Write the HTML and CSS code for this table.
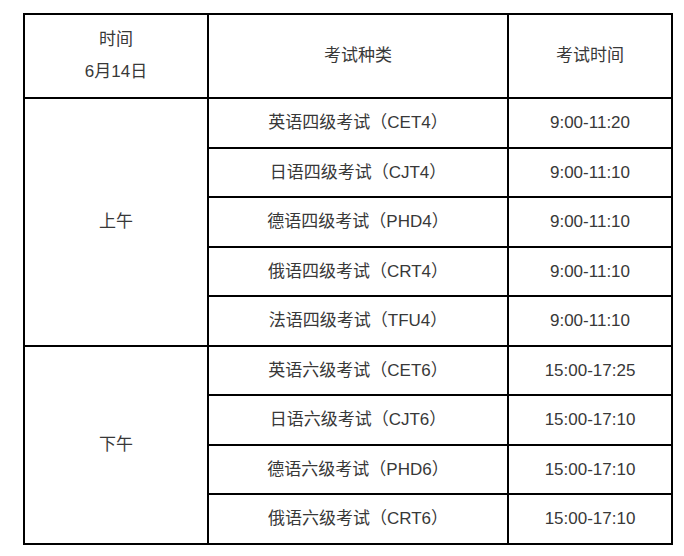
FILE: index.html
```html
<!DOCTYPE html>
<html lang="zh-CN">
<head>
<meta charset="utf-8">
<title>考试时间表</title>
<link rel="stylesheet" href="styles.css">
</head>
<body>
<table class="schedule">
  <colgroup>
    <col class="c1">
    <col class="c2">
    <col class="c3">
  </colgroup>
  <tr class="head">
    <td class="twoline">时间<br>6月14日</td>
    <td>考试种类</td>
    <td>考试时间</td>
  </tr>
  <tr class="r50">
    <td rowspan="5">上午</td>
    <td>英语四级考试（CET4）</td>
    <td>9:00-11:20</td>
  </tr>
  <tr class="r49">
    <td>日语四级考试（CJT4）</td>
    <td>9:00-11:10</td>
  </tr>
  <tr class="r50">
    <td>德语四级考试（PHD4）</td>
    <td>9:00-11:10</td>
  </tr>
  <tr class="r49">
    <td>俄语四级考试（CRT4）</td>
    <td>9:00-11:10</td>
  </tr>
  <tr class="r50">
    <td>法语四级考试（TFU4）</td>
    <td>9:00-11:10</td>
  </tr>
  <tr class="r49">
    <td rowspan="4">下午</td>
    <td>英语六级考试（CET6）</td>
    <td>15:00-17:25</td>
  </tr>
  <tr class="r50">
    <td>日语六级考试（CJT6）</td>
    <td>15:00-17:10</td>
  </tr>
  <tr class="r49">
    <td>德语六级考试（PHD6）</td>
    <td>15:00-17:10</td>
  </tr>
  <tr class="r50">
    <td>俄语六级考试（CRT6）</td>
    <td>15:00-17:10</td>
  </tr>
</table>
</body>
</html>
```
FILE: styles.css
```css
html, body {
  margin: 0;
  padding: 0;
  background: #ffffff;
}
body {
  font-family: "Liberation Sans", "Noto Sans CJK SC", sans-serif;
  font-size: 17px;
  color: #383838;
}
.schedule {
  border-collapse: collapse;
  table-layout: fixed;
  width: 650px;
  margin: 13px 0 0 23px;
}
.c1 { width: 184px; }
.c2 { width: 300px; }
.c3 { width: 164px; }
.schedule td {
  border: 2px solid #000000;
  text-align: center;
  vertical-align: middle;
  padding: 0;
  line-height: 24px;
}
.schedule .head { height: 84px; }
.schedule .twoline { line-height: 32px; }
.schedule .r50 { height: 50px; }
.schedule .r49 { height: 49px; }
```
